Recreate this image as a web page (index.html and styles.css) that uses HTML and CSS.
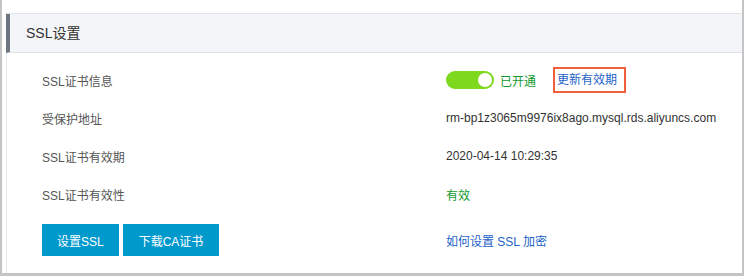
FILE: index.html
```html
<!DOCTYPE html>
<html lang="zh-CN">
<head>
<meta charset="utf-8">
<title>SSL设置</title>
<link rel="stylesheet" href="styles.css">
</head>
<body>
<div class="frame">
  <section class="panel">
    <header class="panel-head">SSL设置</header>
    <div class="panel-body">
      <div class="row">
        <div class="label">SSL证书信息</div>
        <div class="value status">
          <span class="switch"><span class="knob"></span></span>
          <span class="on-text">已开通</span>
          <a class="renew" href="#">更新有效期</a>
        </div>
      </div>
      <div class="row">
        <div class="label">受保护地址</div>
        <div class="value">rm-bp1z3065m9976ix8ago.mysql.rds.aliyuncs.com</div>
      </div>
      <div class="row">
        <div class="label">SSL证书有效期</div>
        <div class="value">2020-04-14 10:29:35</div>
      </div>
      <div class="row">
        <div class="label">SSL证书有效性</div>
        <div class="value valid">有效</div>
      </div>
      <div class="row actions">
        <div class="label buttons">
          <button class="btn" type="button">设置SSL</button>
          <button class="btn" type="button">下载CA证书</button>
        </div>
        <div class="value"><a class="help" href="#">如何设置 SSL 加密</a></div>
      </div>
    </div>
  </section>
</div>
</body>
</html>
```
FILE: styles.css
```css
* { box-sizing: border-box; }
html, body { margin: 0; padding: 0; background: #fff; }
body {
  font-family: "Liberation Sans", "Noto Sans CJK SC", sans-serif;
  font-size: 12px;
  color: #333;
}
.frame {
  width: 744px;
  height: 276px;
  overflow: hidden;
  border-left: 2px solid #c4c4c4;
  border-right: 2px solid #c4c4c4;
  border-bottom: 3px solid #c4c4c4;
  padding: 13px 0 0 4px;
}
.panel {
  border-top: 1px solid #e1e5ea;
  height: 100%;
}
.panel-head {
  height: 39px;
  line-height: 38px;
  background: #f4f5f9;
  border-left: 4px solid #6d7580;
  border-bottom: 1px solid #dde2e8;
  padding-left: 16px;
  font-size: 14px;
  color: #333;
}
.panel-body {
  border-left: 1px solid #e4e7eb;
  height: 100%;
  padding: 8px 0 0 35px;
}
.row {
  display: grid;
  grid-template-columns: 404px 1fr;
  height: 38px;
  align-items: center;
}
.label { color: #555; }
.value { color: #333; }
.status {
  display: flex;
  align-items: center;
}
.switch {
  width: 48px;
  height: 18px;
  border-radius: 9px;
  background: #7ed81e;
  display: flex;
  justify-content: flex-end;
  align-items: center;
  padding-right: 2px;
}
.knob {
  width: 14px;
  height: 14px;
  border-radius: 50%;
  background: #fff;
}
.on-text {
  color: #0f9a2e;
  margin-left: 6px;
}
.renew {
  margin-left: 17px;
  color: #1d62c9;
  text-decoration: none;
  border: 2px solid #f0603c;
  height: 26px;
  line-height: 22px;
  padding: 0 4px 0 2px;
  width: 73px;
}
.valid { color: #0f9a2e; }
.actions {
  height: 32px;
  margin-top: 11px;
}
.buttons {
  display: flex;
  gap: 4px;
}
.btn {
  height: 32px;
  border: 0;
  border-radius: 0;
  background: #0099cc;
  color: #fff;
  font-family: inherit;
  font-size: 12px;
  padding: 0 15px;
  cursor: pointer;
}
.btn + .btn { padding: 0 16px; }
.help {
  color: #1d62c9;
  text-decoration: none;
}
```
